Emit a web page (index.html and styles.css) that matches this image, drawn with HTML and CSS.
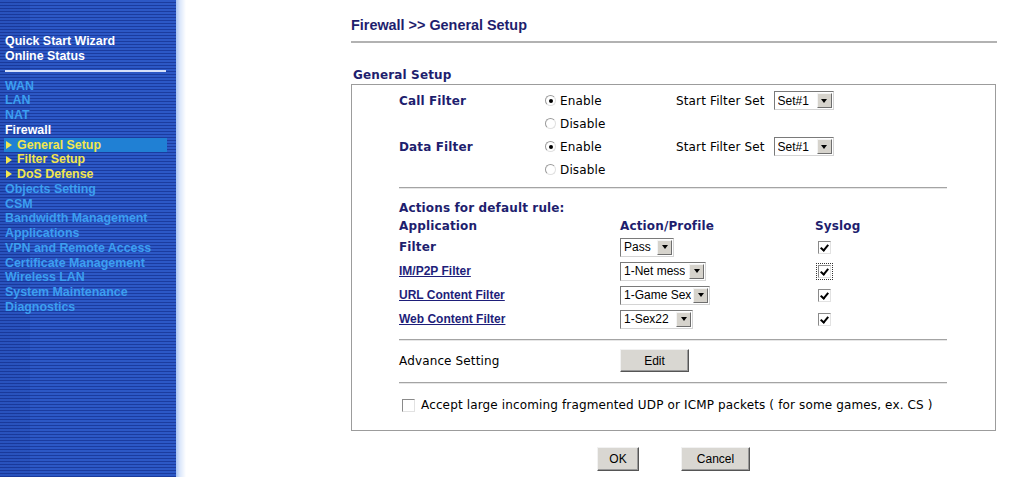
FILE: index.html
```html
<!DOCTYPE html>
<html>
<head>
<meta charset="utf-8">
<title>Firewall &gt;&gt; General Setup</title>
<link rel="stylesheet" href="styles.css">
</head>
<body>
<div class="page">
  <nav class="sidebar">
    <a class="nav-top">Quick Start Wizard</a>
    <a class="nav-top">Online Status</a>
    <div class="nav-sep"></div>
    <a class="nav-item">WAN</a>
    <a class="nav-item">LAN</a>
    <a class="nav-item">NAT</a>
    <a class="nav-item current">Firewall</a>
    <a class="nav-item sub active">General Setup</a>
    <a class="nav-item sub">Filter Setup</a>
    <a class="nav-item sub">DoS Defense</a>
    <a class="nav-item">Objects Setting</a>
    <a class="nav-item">CSM</a>
    <a class="nav-item">Bandwidth Management</a>
    <a class="nav-item">Applications</a>
    <a class="nav-item">VPN and Remote Access</a>
    <a class="nav-item">Certificate Management</a>
    <a class="nav-item">Wireless LAN</a>
    <a class="nav-item">System Maintenance</a>
    <a class="nav-item">Diagnostics</a>
  </nav>
  <div class="edge"></div>
  <main class="main">
    <h1 class="title">Firewall &gt;&gt; General Setup</h1>
    <div class="title-rule"></div>
    <h2 class="section-title">General Setup</h2>
    <div class="box">
      <div class="filters">
        <div class="label">Call Filter</div>
        <label class="opt"><span class="radio checked"></span>Enable</label>
        <div class="set">Start Filter Set <span class="select w-set"><span class="val">Set#1</span><span class="arrow"></span></span></div>
        <div></div>
        <label class="opt"><span class="radio"></span>Disable</label>
        <div></div>
        <div class="label">Data Filter</div>
        <label class="opt"><span class="radio checked"></span>Enable</label>
        <div class="set">Start Filter Set <span class="select w-set"><span class="val">Set#1</span><span class="arrow"></span></span></div>
        <div></div>
        <label class="opt"><span class="radio"></span>Disable</label>
        <div></div>
      </div>
      <div class="rule"></div>
      <div class="actions">
        <div class="label span3">Actions for default rule:</div>
        <div class="label head">Application</div>
        <div class="label head">Action/Profile</div>
        <div class="label head">Syslog</div>

        <div class="label">Filter</div>
        <div><span class="select w-pass"><span class="val">Pass</span><span class="arrow"></span></span></div>
        <div class="cbcell"><span class="checkbox checked"></span></div>

        <div><a class="link">IM/P2P Filter</a></div>
        <div><span class="select w-net"><span class="val">1-Net mess</span><span class="arrow"></span></span></div>
        <div class="cbcell"><span class="focus"><span class="checkbox checked"></span></span></div>

        <div><a class="link">URL Content Filter</a></div>
        <div><span class="select w-game"><span class="val">1-Game Sex</span><span class="arrow"></span></span></div>
        <div class="cbcell"><span class="checkbox checked"></span></div>

        <div><a class="link">Web Content Filter</a></div>
        <div><span class="select w-sex"><span class="val">1-Sex22</span><span class="arrow"></span></span></div>
        <div class="cbcell"><span class="checkbox checked"></span></div>
      </div>
      <div class="rule"></div>
      <div class="advance">
        <div class="plain">Advance Setting</div>
        <div><button class="btn w-edit">Edit</button></div>
      </div>
      <div class="rule"></div>
      <label class="frag"><span class="checkbox"></span>Accept large incoming fragmented UDP or ICMP packets ( for some games, ex. CS )</label>
    </div>
    <div class="buttons">
      <button class="btn w-ok">OK</button>
      <button class="btn w-cancel">Cancel</button>
    </div>
  </main>
</div>
</body>
</html>
```

FILE: styles.css
```css
html, body {
  margin: 0;
  padding: 0;
  background: #ffffff;
}
body {
  font-family: "DejaVu Sans", Verdana, sans-serif;
  font-size: 12px;
  letter-spacing: 0.14px;
  color: #000;
}
.page {
  display: flex;
  height: 477px;
  overflow: hidden;
}

/* ---------- sidebar ---------- */
.sidebar {
  width: 176px;
  flex: none;
  display: flex;
  flex-direction: column;
  padding-top: 34px;
  box-sizing: border-box;
  background:
    linear-gradient(to right, rgba(10, 30, 110, 0.10) 0, rgba(10, 30, 110, 0.10) 30px, rgba(0,0,0,0) 30px),
    repeating-linear-gradient(to bottom, #2c58c6 0, #2c58c6 2px, #1b3c9f 2px, #1b3c9f 3px);
  font-family: "Liberation Sans", Arial, sans-serif;
  font-weight: bold;
  font-size: 12.4px;
  letter-spacing: 0;
  line-height: 14.75px;
}
.nav-top {
  display: block;
  color: #ffffff;
  padding-left: 5px;
}
.nav-sep {
  height: 2px;
  margin: 6px 10px 7px 5px;
  background: #d6e0fa;
}
.nav-item {
  display: block;
  color: #3c9ff0;
  margin: 0 9px 0 4px;
  padding-left: 1px;
  white-space: nowrap;
}
.nav-item.current {
  color: #ffffff;
}
.nav-item.sub {
  color: #f2e64e;
  display: flex;
  align-items: center;
}
.nav-item.sub::before {
  content: "";
  width: 0;
  height: 0;
  border-top: 4px solid transparent;
  border-bottom: 4px solid transparent;
  border-left: 6px solid #f2e64e;
  margin: 0 5px 0 1px;
}
.nav-item.active {
  background: #2080d4;
}
.edge {
  width: 10px;
  flex: none;
  background: linear-gradient(to right, #a9c4f2 0, #dbe7fb 40%, #ffffff 100%);
}

/* ---------- main ---------- */
.main {
  flex: 1;
  padding: 17px 0 0 165px;
}
.title {
  margin: 0;
  font-family: "Liberation Sans", Arial, sans-serif;
  font-size: 14.4px;
  font-weight: bold;
  letter-spacing: 0;
  line-height: 17px;
  color: #1e1e6e;
}
.title-rule {
  width: 646px;
  height: 2px;
  margin-top: 7px;
  background: #b2b2b2;
}
.section-title {
  margin: 25px 0 1px 2px;
  font-size: 12px;
  font-weight: bold;
  line-height: 15px;
  color: #1e1e6e;
}
.box {
  width: 645px;
  box-sizing: border-box;
  border: 1px solid #9c9c9c;
  padding: 4px 48px 16px 47px;
}
.label {
  font-weight: bold;
  color: #1e1e6e;
}
.filters {
  display: grid;
  grid-template-columns: 146px 131px auto;
  grid-auto-rows: 23px;
  align-items: center;
}
.opt {
  display: flex;
  align-items: center;
}
.radio {
  width: 9px;
  height: 9px;
  border-radius: 50%;
  border: 1px solid #9a9a9a;
  border-right-color: #e0e0e0;
  border-bottom-color: #e0e0e0;
  margin: 0 4px 0 0;
  position: relative;
  background: #fff;
}
.radio.checked::after {
  content: "";
  position: absolute;
  left: 2.5px;
  top: 2.5px;
  width: 4px;
  height: 4px;
  border-radius: 50%;
  background: #000;
}
.set {
  display: flex;
  align-items: center;
  gap: 9px;
}
.select {
  display: inline-flex;
  align-items: center;
  justify-content: space-between;
  height: 19px;
  box-sizing: border-box;
  border: 1px solid #7a7a7a;
  border-right-color: #d4d4d4;
  border-bottom-color: #d4d4d4;
  background: #fff;
  font-family: "Liberation Sans", Arial, sans-serif;
  font-size: 12px;
  letter-spacing: 0;
  padding: 0 1px 0 3px;
  vertical-align: middle;
}
.val {
  white-space: nowrap;
  overflow: hidden;
}
.arrow {
  width: 15px;
  height: 15px;
  flex: none;
  box-sizing: border-box;
  background: #d6d3cc;
  border: 1px solid;
  border-color: #f4f4f4 #6e6e6e #6e6e6e #f4f4f4;
  display: flex;
  align-items: center;
  justify-content: center;
}
.arrow::after {
  content: "";
  border-left: 3.5px solid transparent;
  border-right: 3.5px solid transparent;
  border-top: 4px solid #000;
}
.w-set { width: 60px; }
.w-pass { width: 54px; }
.w-net { width: 86px; }
.w-game { width: 90px; }
.w-sex { width: 73px; }

.rule {
  height: 1px;
  background: #a4a4a4;
  border-bottom: 1px solid #e6e6e6;
}
.filters + .rule {
  margin-top: 6px;
}
.actions {
  display: grid;
  grid-template-columns: 221px 195px auto;
  grid-template-rows: 18px 18px repeat(4, 24px);
  align-items: center;
  margin-top: 10px;
  margin-bottom: 8px;
}
.span3 {
  grid-column: 1 / 4;
}
.link {
  font-family: "Liberation Sans", Arial, sans-serif;
  font-weight: bold;
  font-size: 12px;
  letter-spacing: 0;
  color: #1e1e7a;
  text-decoration: underline;
}
.cbcell {
  padding-left: 3px;
  display: flex;
  align-items: center;
}
.focus {
  display: inline-flex;
  outline: 1px dotted #333;
  outline-offset: 1px;
}
.checkbox {
  width: 11px;
  height: 11px;
  flex: none;
  border: 1px solid #8a8a8a;
  border-right-color: #e2e2e2;
  border-bottom-color: #e2e2e2;
  background: #fff;
  position: relative;
  display: inline-block;
}
.checkbox.checked::after {
  content: "";
  position: absolute;
  left: 3px;
  top: 1px;
  width: 3px;
  height: 6px;
  border-right: 2px solid #000;
  border-bottom: 2px solid #000;
  transform: rotate(40deg);
}
.advance {
  display: grid;
  grid-template-columns: 221px auto;
  align-items: center;
  margin: 8px 0 10px;
}
.btn {
  font-family: "Liberation Sans", Arial, sans-serif;
  font-size: 12px;
  letter-spacing: 0;
  color: #000;
  background: #d9d7d2;
  border: 1px solid;
  border-color: #f2f2f2 #555 #555 #f2f2f2;
  box-shadow: inset -1px -1px 0 #999;
  height: 23px;
  padding: 0;
  display: block;
}
.w-edit { width: 69px; }
.w-ok { width: 42px; height: 24px; }
.w-cancel { width: 69px; height: 24px; }
.frag {
  display: flex;
  align-items: center;
  margin-top: 12px;
  padding-left: 3px;
  line-height: 18px;
}
.frag .checkbox {
  margin-right: 6px;
}
.buttons {
  width: 645px;
  display: flex;
  justify-content: center;
  gap: 42px;
  margin-top: 16px;
}
```
